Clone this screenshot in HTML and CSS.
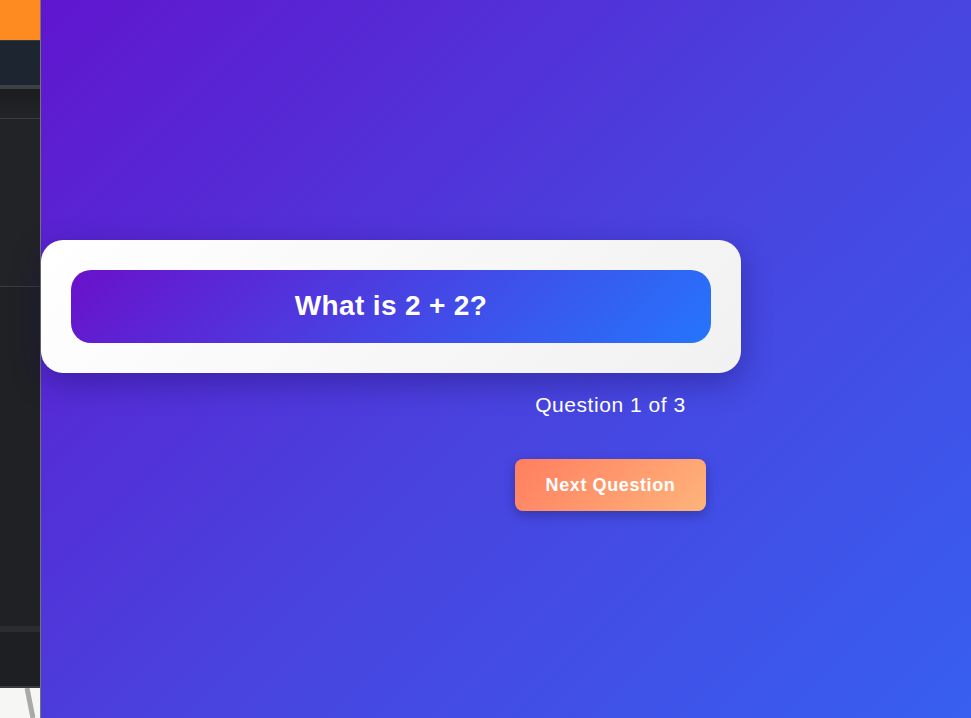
FILE: index.html
```html
<!DOCTYPE html>
<html lang="en">
<head>
<meta charset="utf-8">
<title>Quiz</title>
<link rel="stylesheet" href="styles.css">
</head>
<body>
<div class="shell">
  <aside class="side">
    <div class="s-orange"></div>
    <div class="s-line"></div>
    <div class="s-navy"></div>
    <div class="s-sep"></div>
    <div class="s-head"></div>
    <div class="s-line"></div>
    <div class="s-block1"></div>
    <div class="s-line"></div>
    <div class="s-block2"></div>
    <div class="s-band"></div>
    <div class="s-block3"></div>
    <div class="s-line2"></div>
    <div class="s-white">
      <svg class="s-stroke" width="40" height="30" viewBox="0 0 40 30"><path d="M27 0 L33 30" stroke="#a9a9a7" stroke-width="5" fill="none"/></svg>
    </div>
  </aside>
  <main class="main">
    <section class="card">
      <div class="question">What is 2 + 2?</div>
    </section>
    <div class="controls">
      <p class="progress">Question 1 of 3</p>
      <button class="next">Next Question</button>
    </div>
  </main>
</div>
</body>
</html>
```
FILE: styles.css
```css
* { box-sizing: border-box; }
html, body { margin: 0; padding: 0; height: 100%; }
body {
  font-family: "Liberation Sans", Arial, sans-serif;
  overflow: hidden;
}
.shell {
  display: flex;
  width: 971px;
  height: 718px;
}
.side {
  width: 41px;
  flex: none;
  display: flex;
  flex-direction: column;
  border-right: 1px solid #75756f;
  background: #202125;
}
.s-orange { height: 40px; background: #fd8b21; }
.s-line { height: 1px; background: #3a3b3e; }
.s-line2 { height: 2px; background: #3a3b3e; }
.s-navy { height: 44px; background: #1d2530; }
.s-sep { height: 4px; background: #3c3f44; }
.s-head { height: 29px; background: linear-gradient(#1b1c1e, #232427); }
.s-block1 { height: 167px; background: #222327; }
.s-block2 { height: 339px; background: #202125; }
.s-band { height: 6px; background: #2a2d31; }
.s-block3 { height: 54px; background: #1e1f22; }
.s-white { flex: 1; background: #f6f6f4; overflow: hidden; }
.s-stroke { display: block; }
.main {
  flex: 1;
  background: linear-gradient(135deg, #6016ce 0%, #4a41de 50%, #375ff0 100%);
  padding-top: 240px;
  display: flex;
  flex-direction: column;
}
.card {
  width: 700px;
  padding: 30px;
  border-radius: 22px;
  background: linear-gradient(135deg, #ffffff 0%, #f1f1f1 100%);
  box-shadow: 0 10px 30px rgba(20, 10, 80, 0.35);
}
.question {
  height: 73px;
  border-radius: 20px;
  background: linear-gradient(135deg, #6a11cb 0%, #2575fc 100%);
  color: #fff;
  font-weight: bold;
  font-size: 28px;
  letter-spacing: 0.35px;
  display: flex;
  align-items: center;
  justify-content: center;
  padding-bottom: 2px;
}
.controls {
  margin-left: 209px;
  width: 721px;
  display: flex;
  flex-direction: column;
  align-items: center;
}
.progress {
  margin: 20px 0 0;
  color: #fff;
  font-size: 21px;
  letter-spacing: 0.55px;
  line-height: 24px;
}
.next {
  margin-top: 42px;
  width: 191px;
  height: 52px;
  border: none;
  border-radius: 8px;
  background: linear-gradient(135deg, #ff7e5f 0%, #feb47b 100%);
  color: #fff;
  font-family: "Liberation Sans", Arial, sans-serif;
  font-weight: bold;
  font-size: 18px;
  letter-spacing: 0.6px;
  box-shadow: 0 4px 12px rgba(0, 0, 0, 0.25);
  cursor: pointer;
}
```
